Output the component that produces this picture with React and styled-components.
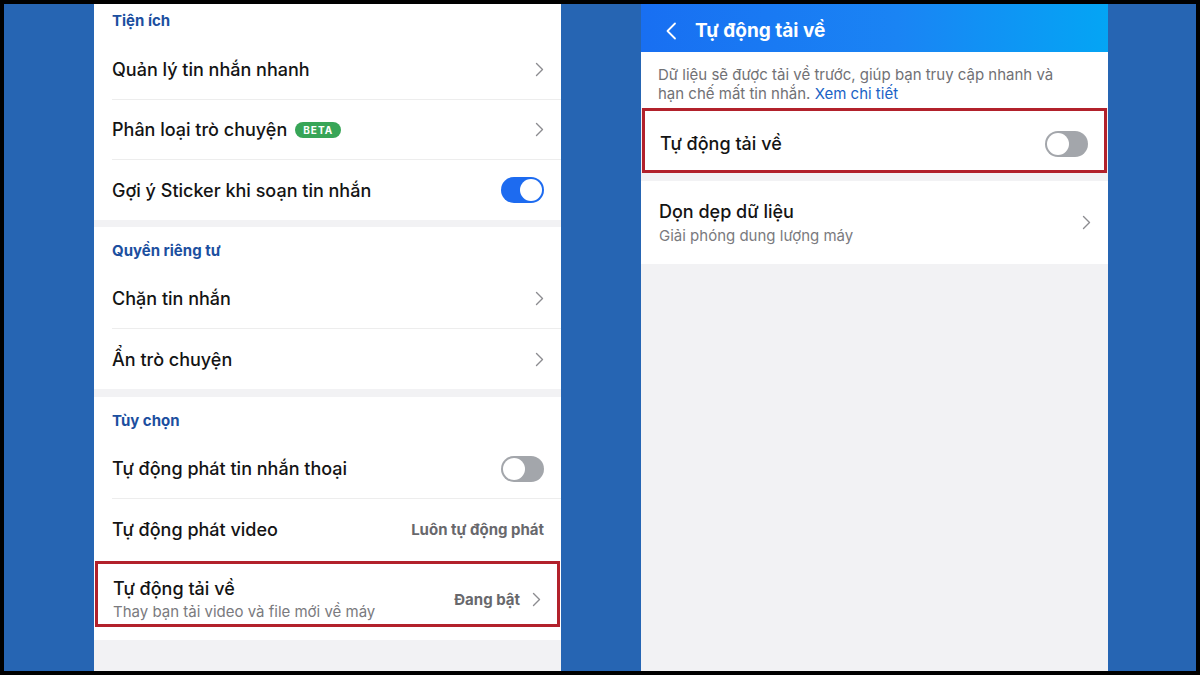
import React from "react";
import styled, { createGlobalStyle } from "styled-components";

const GlobalStyle = createGlobalStyle`
  html, body {
    margin: 0;
    padding: 0;
    width: 1200px;
    height: 675px;
    overflow: hidden;
    background: #000;
  }
  * {
    box-sizing: border-box;
  }
  body {
    font-family: Inter, "Noto Sans", sans-serif;
  }
`;

const Frame = styled.div`
  width: 1200px;
  height: 675px;
  padding: 4px;
  background: #000;
`;

const Stage = styled.div`
  display: flex;
  gap: 80px;
  height: 100%;
  padding-left: 90px;
  background: #2665b3;
`;

const Phone = styled.div`
  display: flex;
  flex-direction: column;
  width: 467px;
  height: 100%;
  background: #f2f2f4;
  overflow: hidden;
`;

const Section = styled.div`
  background: #fff;
  margin-bottom: ${(p) => p.$gap || 0}px;
  padding-bottom: ${(p) => p.$pad || 0}px;
`;

const SectionTitle = styled.div`
  display: flex;
  align-items: center;
  height: ${(p) => p.$h || 42}px;
  padding: 0 18px;
  padding-top: ${(p) => p.$top ?? 4}px;
  padding-bottom: ${(p) => p.$bottom || 0}px;
  font-size: 15px;
  font-weight: 700;
  color: #1c4f9f;
`;

const Row = styled.div`
  display: flex;
  align-items: center;
  height: ${(p) => p.$h || 60}px;
  padding-left: 18px;
`;

const RowBody = styled.div`
  display: flex;
  align-items: center;
  flex: 1;
  height: 100%;
  padding-right: 17px;
  border-bottom: ${(p) => (p.$last ? "none" : "1px solid #ededed")};
`;

const Highlight = styled.div`
  display: flex;
  align-items: center;
  height: ${(p) => p.$h}px;
  margin: ${(p) => p.$mt || 0}px 1px 0;
  padding: ${(p) => p.$pt || 0}px 16px 0 15px;
  border: 3px solid #b2212b;
  background: #fff;
`;

const Texts = styled.div`
  display: flex;
  flex-direction: column;
  flex: 1;
  gap: ${(p) => p.$gap || 2}px;
`;

const Label = styled.div`
  font-size: 18px;
  font-weight: 500;
  color: #141414;
  display: flex;
  align-items: center;
  gap: 8px;
`;

const Sub = styled.div`
  font-size: 15px;
  color: #7a7a7e;
`;

const Value = styled.div`
  font-size: 15px;
  font-weight: 700;
  color: #68686c;
  margin-right: ${(p) => p.$mr || 0}px;
`;

const Beta = styled.span`
  display: inline-flex;
  align-items: center;
  height: 16px;
  padding: 0 8px;
  border-radius: 8px;
  background: #37a557;
  color: #fff;
  font-size: 10px;
  font-weight: 700;
  letter-spacing: 1px;
`;

const Track = styled.div`
  position: relative;
  width: 43px;
  height: 26px;
  border-radius: 13px;
  background: ${(p) => (p.$on ? "#1d6bf0" : "#a3a6ab")};
`;

const Knob = styled.div`
  position: absolute;
  top: 2px;
  left: ${(p) => (p.$on ? "19px" : "2px")};
  width: 22px;
  height: 22px;
  border-radius: 50%;
  background: #fff;
`;

const Header = styled.div`
  display: flex;
  align-items: center;
  height: 48px;
  flex-shrink: 0;
  padding: 5px 0 0 24px;
  gap: 18px;
  background: linear-gradient(90deg, #186ff2 0%, #1a84f4 55%, #04a5f4 100%);
  color: #fff;
  font-size: 19px;
  font-weight: 700;
`;

const Intro = styled.div`
  background: #fff;
  padding: 13px 40px 0 17px;
  height: 56px;
  font-size: 15px;
  line-height: 19px;
  color: #717175;
`;

const LinkText = styled.span`
  color: #1a63c6;
`;

const Divider = styled.div`
  height: 8px;
  background: #f2f2f4;
`;

const Chevron = () => (
  <svg width="9" height="15" viewBox="0 0 9 15">
    <path d="M1.5 1.5 L7.5 7.5 L1.5 13.5" fill="none" stroke="#8c8c90" strokeWidth="1.4" strokeLinecap="round" strokeLinejoin="round" />
  </svg>
);

const BackIcon = () => (
  <svg width="12" height="18" viewBox="0 0 12 18">
    <path d="M10 1.5 L2.5 9 L10 16.5" fill="none" stroke="#fff" strokeWidth="1.8" strokeLinecap="round" strokeLinejoin="round" />
  </svg>
);

const Toggle = ({ on }) => (
  <Track $on={on}>
    <Knob $on={on} />
  </Track>
);

const SettingRow = ({ label, right, last }) => (
  <Row>
    <RowBody $last={last}>
      <Texts>
        <Label>{label}</Label>
      </Texts>
      {right}
    </RowBody>
  </Row>
);

const App = () => {
  return (
    <>
      <GlobalStyle />
      <Frame>
        <Stage>
          <Phone>
            <Section $gap={7}>
              <SectionTitle $h={36} $top={0} $bottom={4}>Tiện ích</SectionTitle>
              <SettingRow label="Quản lý tin nhắn nhanh" right={<Chevron />} />
              <SettingRow
                label={
                  <>
                    Phân loại trò chuyện <Beta>BETA</Beta>
                  </>
                }
                right={<Chevron />}
              />
              <SettingRow label="Gợi ý Sticker khi soạn tin nhắn" right={<Toggle on />} last />
            </Section>
            <Section $gap={8}>
              <SectionTitle>Quyền riêng tư</SectionTitle>
              <SettingRow label="Chặn tin nhắn" right={<Chevron />} />
              <SettingRow label="Ẩn trò chuyện" right={<Chevron />} last />
            </Section>
            <Section $pad={13}>
              <SectionTitle>Tùy chọn</SectionTitle>
              <SettingRow label="Tự động phát tin nhắn thoại" right={<Toggle />} />
              <SettingRow label="Tự động phát video" right={<Value>Luôn tự động phát</Value>} last />
              <Highlight $h={66} $mt={2} $pt={10}>
                <Texts $gap={3}>
                  <Label>Tự động tải về</Label>
                  <Sub>Thay bạn tải video và file mới về máy</Sub>
                </Texts>
                <Value $mr={12}>Đang bật</Value>
                <Chevron />
              </Highlight>
            </Section>
          </Phone>

          <Phone>
            <Header>
              <BackIcon />
              Tự động tải về
            </Header>
            <Intro>
              Dữ liệu sẽ được tải về trước, giúp bạn truy cập nhanh và hạn chế mất tin nhắn.{" "}
              <LinkText>Xem chi tiết</LinkText>
            </Intro>
            <Highlight $h={65} $pt={6}>
              <Texts>
                <Label>Tự động tải về</Label>
              </Texts>
              <Toggle />
            </Highlight>
            <Divider />
            <Section>
              <Row $h={83}>
                <RowBody $last>
                  <Texts $gap={4}>
                    <Label>Dọn dẹp dữ liệu</Label>
                    <Sub>Giải phóng dung lượng máy</Sub>
                  </Texts>
                  <Chevron />
                </RowBody>
              </Row>
            </Section>
          </Phone>
        </Stage>
      </Frame>
    </>
  );
};

export default App;
